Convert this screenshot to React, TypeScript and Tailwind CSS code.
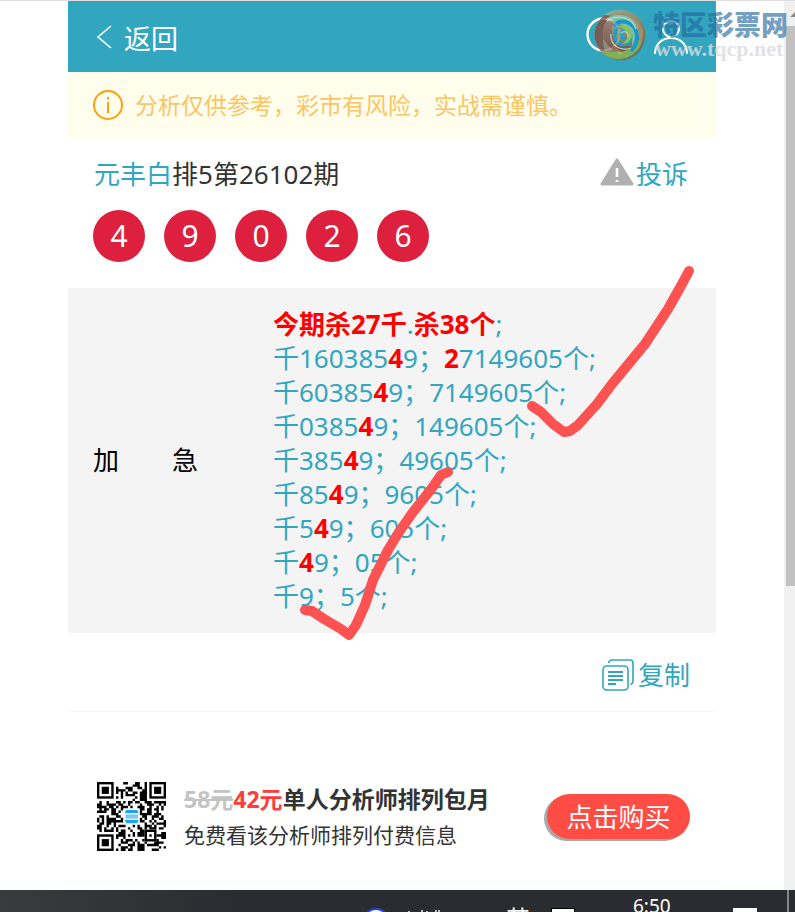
interface PickRow {
  head: string;
  hit: string;
  tail: string;
  lead?: string;
  rest: string;
}

const BALLS = ['4', '9', '0', '2', '6'];

const ROWS: PickRow[] = [
  { head: '千160385', hit: '4', tail: '9；', lead: '2', rest: '7149605个;' },
  { head: '千60385', hit: '4', tail: '9；', rest: '7149605个;' },
  { head: '千0385', hit: '4', tail: '9；', rest: '149605个;' },
  { head: '千385', hit: '4', tail: '9；', rest: '49605个;' },
  { head: '千85', hit: '4', tail: '9；', rest: '9605个;' },
  { head: '千5', hit: '4', tail: '9；', rest: '605个;' },
  { head: '千', hit: '4', tail: '9；', rest: '05个;' },
  { head: '千9；', hit: '', tail: '', rest: '5个;' },
];

const QR_SIZE = 29;

function isFinder(x: number, y: number) {
  return (x < 8 && y < 8) || (x > 20 && y < 8) || (x < 8 && y > 20);
}

function qrPath() {
  let d = '';
  let seed = 26102;
  for (let y = 0; y < QR_SIZE; y++) {
    for (let x = 0; x < QR_SIZE; x++) {
      seed = (seed * 1103515245 + 12345) % 2147483648;
      if (isFinder(x, y)) continue;
      if (x > 10 && x < 18 && y > 10 && y < 18) continue;
      if (x > 19 && x < 25 && y > 19 && y < 25) continue;
      if (seed / 2147483648 > 0.47) d += `M${x} ${y}h1v1h-1z`;
    }
  }
  return d;
}

function Finder({ x, y, size = 7 }: { x: number; y: number; size?: number }) {
  return (
    <g>
      <rect x={x + 0.5} y={y + 0.5} width={size - 1} height={size - 1} fill="none" stroke="#000" />
      <rect x={x + 2} y={y + 2} width={size - 4} height={size - 4} />
    </g>
  );
}

function QrCode() {
  return (
    <svg viewBox="0 0 29 29" className="w-[69px] h-[69px] shrink-0" role="img" aria-label="QR">
      <path d={qrPath()} />
      <Finder x={0} y={0} />
      <Finder x={22} y={0} />
      <Finder x={0} y={22} />
      <Finder x={20} y={20} size={5} />
      <path d="M12.3 11.8h4.5l.7 1.2h-5.8zM11.7 16h5.8l-.7 1.3h-4.5z" fill="#1aa3ee" />
      <rect x="12" y="13.6" width="5.2" height="1.8" fill="#7cc8ee" />
    </svg>
  );
}

function Swirl() {
  return (
    <svg viewBox="0 0 54 54" className="w-[54px] h-[54px]" aria-hidden="true">
      <defs>
        <linearGradient id="rim" x1="0" y1="0" x2="1" y2="1">
          <stop offset="0" stopColor="#9cc4ae" />
          <stop offset="0.5" stopColor="#9a8a68" />
          <stop offset="1" stopColor="#5d5238" />
        </linearGradient>
        <linearGradient id="rust" x1="0" y1="0" x2="0" y2="1">
          <stop offset="0" stopColor="#b5826a" />
          <stop offset="1" stopColor="#8f3f2c" />
        </linearGradient>
      </defs>
      <circle cx="27" cy="27" r="25.5" fill="url(#rim)" />
      <path d="M12 7C-3 18-1 39 13 46c-6-14-2-28 8-38z" fill="#8a4a3c" />
      <path d="M21 7C6 14 6 34 20 41c9 5 20 3 24-3-12 2-24-4-25-14-1-8 3-14 10-17z" fill="url(#rust)" />
      <path d="M8 43c9 11 29 11 38-3 3-5 4-10 3-15-3 11-13 19-24 19-7 0-12 0-17-1z" fill="#92b53c" />
      <path d="M14 10C25 0 43 5 49 20c2 6 1 13-2 18 0-13-7-23-18-27-6-2-11-2-15-1z" fill="#c08a4c" />
      <path d="M12 12C23 3 37 6 43 16c5 10 2 21-5 26 3-9 1-19-7-24-7-4-13-6-19-6z" fill="#8fc9a0" />
      <path d="M38 43c7-7 8-18 2-25-6-6-15-6-19 0" fill="none" stroke="#1593cc" strokeWidth="4" />
      <path d="M26 19c-5 4-6 12-1 16 5 4 13 1 13-6 0-6-8-8-10-3-1 3 2 6 5 4" fill="none" stroke="#13a0c8" strokeWidth="3" />
      <path d="M25 19c7-3 14 0 14 7 0 6-4 10-10 10 5-3 7-8 4-12-2-4-5-5-8-5z" fill="#a8c83f" />
      <path d="M18 26c-1 11 9 18 20 14M14 13c11-7 25-4 29 8M28 25c3-3 8-1 7 4" fill="none" stroke="#d5e6d0" strokeWidth="1.2" />
    </svg>
  );
}

function Watermark() {
  return (
    <div className="absolute left-[525px] top-[7px] z-10 flex items-center gap-1.5 opacity-80 pointer-events-none">
      <Swirl />
      <div className="whitespace-nowrap">
        <div className="text-[27px] leading-7 h-7 font-black text-[#2368a0]/80">特区彩票网</div>
        <div className="pl-0.5 text-[22px] leading-5 font-bold text-[#dcdce0] font-['Liberation_Serif',serif]">
          www.tqcp.net
        </div>
      </div>
    </div>
  );
}

function Header() {
  return (
    <header className="flex items-center justify-between h-[71px] bg-[#33a6bf] pl-7 pr-7 text-white">
      <a href="#back" className="flex items-center gap-3 text-[27px] leading-9 pt-1">
        <svg viewBox="0 0 16 24" className="w-4 h-6 -mt-1" fill="none" stroke="currentColor" strokeWidth="1.6">
          <path d="M15 1L2 12l13 11" />
        </svg>
        返回
      </a>
      <div className="flex items-center gap-[29px]">
        <button aria-label="搜索">
          <svg viewBox="0 0 38 40" className="w-[38px] h-10" fill="none" stroke="currentColor" strokeWidth="2.4">
            <circle cx="18.5" cy="17.5" r="16" />
            <path d="M29 29.500l7 7.500" />
          </svg>
        </button>
        <button aria-label="我的">
          <svg viewBox="0 0 36 36" className="w-9 h-9" fill="none" stroke="currentColor" strokeWidth="2">
            <circle cx="19" cy="10" r="8" />
            <path d="M3 35c0-10 7-16 16-16s16 6 16 16" />
          </svg>
        </button>
      </div>
    </header>
  );
}

function CheckMarks() {
  return (
    <svg
      viewBox="0 0 648 345"
      className="absolute left-0 top-0 w-[648px] h-[345px] overflow-visible pointer-events-none"
      fill="none"
      stroke="#fc5252"
      strokeWidth="10"
      strokeLinecap="round"
      strokeLinejoin="round"
    >
      <path d="M464 118L473 124L485 136L496 144L502 143L510 137L529 116L544 96L577 56L600 21L614 -4L621 -17" />
      <path d="M237 322L244 323L256 331L273 341L281 347L288 337L297 317L305 292L320 262L331 244L345 224L364 200L373 187L380 184" />
    </svg>
  );
}

function Taskbar() {
  return (
    <footer className="flex items-start h-[22px] shrink-0 overflow-hidden bg-linear-to-r from-[#3a3b3e] to-[#2b2c31] to-30% text-white">
      <div className="flex-1" />
      <div className="mt-[18px] w-[26px] h-[26px] shrink-0 rounded-full border-2 border-[#2545e8] bg-white" />
      <svg viewBox="0 0 117 22" className="w-[117px] h-[22px] shrink-0" stroke="#fff" strokeWidth="1.4" aria-hidden="true">
        <path d="M20 21v1M33 20v2M38 21v1M47 20v2M50 20v2" />
      </svg>
      <div className="pt-[15px] w-[45px] shrink-0 text-2xl leading-7">英</div>
      <div className="mt-[18px] w-6 h-5 shrink-0 border border-black bg-white" />
      <time className="pt-1 pl-[58px] w-[158px] shrink-0 text-[19px] leading-6">6:50</time>
      <div className="mt-[18px] w-6 h-5 shrink-0 bg-white" />
      <div className="ml-[30px] mr-1.5 w-0.5 h-full shrink-0 bg-[#85868a]" />
    </footer>
  );
}

export default function App() {
  return (
    <div className="h-screen flex flex-col overflow-hidden bg-white font-['Noto_Sans','Noto_Sans_CJK_SC',sans-serif]">
      <div className="flex flex-1 min-h-0 border-t border-[#dedede]">
        <main className="flex-1 min-w-0">
          <div className="relative max-w-[648px] mx-auto">
            <Header />
            <Watermark />

            <div className="flex items-center gap-3 h-[65px] pl-[25px] bg-[#fffeec] text-[23px] text-[#fbc466]">
              <svg viewBox="0 0 30 30" className="w-[30px] h-[30px] shrink-0" fill="none" stroke="#ff9f0a" strokeWidth="2">
                <circle cx="15" cy="15" r="14" />
                <path d="M15 12v11M15 7v2.4" />
              </svg>
              <p className="pt-0.5 whitespace-nowrap">分析仅供参考，彩市有风险，实战需谨慎。</p>
            </div>

            <section className="px-[26px] pt-[19px] pb-[26px]">
              <div className="flex items-center justify-between text-[26px] leading-9">
                <h1 className="text-[#333]">
                  <a href="#analyst" className="text-[#33a6bf]">元丰白</a>排5第26102期
                </h1>
                <a href="#complain" className="flex items-center gap-0.5 pr-0.5 text-[#33a6bf]">
                  <svg viewBox="0 0 34 28" className="w-[34px] h-7 -mt-1" aria-hidden="true">
                    <path d="M17 2L32 26H2z" fill="#b0b0b0" stroke="#b0b0b0" strokeWidth="3" strokeLinejoin="round" />
                    <path d="M17 10v9M17 22v2" stroke="#fff" strokeWidth="2.6" />
                  </svg>
                  投诉
                </a>
              </div>
              <div className="flex gap-[19px] mt-[18px] -ml-px">
                {BALLS.map((n, i) => (
                  <span
                    key={i}
                    className="flex items-center justify-center w-[52px] h-[52px] rounded-full bg-[#dc203e] text-white text-3xl"
                  >
                    {n}
                  </span>
                ))}
              </div>
            </section>

            <section className="relative flex items-center bg-[#f4f4f4] pt-[19px] pb-5 pl-[25px] text-[26px] leading-[34px]">
              <div className="flex justify-between w-[105px] text-black">
                <span>加</span>
                <span>急</span>
              </div>
              <div className="pl-[75px] text-[#33a6bf] whitespace-nowrap">
                <p>
                  <b className="text-[#f00]">今期杀27千</b>.<b className="text-[#f00]">杀38个</b>;
                </p>
                {ROWS.map((r) => (
                  <p key={r.head}>
                    {r.head}
                    <b className="text-[#f00]">{r.hit}</b>
                    {r.tail}
                    {r.lead && <b className="text-[#f00]">{r.lead}</b>}
                    {r.rest}
                  </p>
                ))}
              </div>
              <CheckMarks />
            </section>

            <div className="flex justify-end h-[79px] pt-[23px] pr-[26px] border-b border-[#f8f8f8]">
              <button className="flex items-center gap-1 h-[38px] text-[26px] text-[#33a6bf]">
                <svg viewBox="0 0 32 32" className="w-8 h-8" fill="none" stroke="currentColor" strokeWidth="1.6" strokeLinejoin="round">
                  <rect x="1" y="7" width="25" height="24" rx="3.5" />
                  <path d="M6.500 4c.5-2 1.500-3 3.500-3h18c2 0 3 1 3 3v18c0 2-1 3-2.500 3.500" />
                  <path d="M6 13h15M6 17h15M6 21h15M6 25h8" strokeWidth="2" />
                </svg>
                复制
              </button>
            </div>

            <section className="flex items-center h-[170px] pt-10 pl-[29px] pr-[26px] border-b border-[#f8f8f8]">
              <QrCode />
              <div className="flex-1 pl-[18px] whitespace-nowrap text-[#333]">
                <p className="text-[23px] leading-9 font-bold">
                  <del className="text-[#c4c4c4]">58元</del>
                  <span className="text-[#ff3b3b]">42元</span>单人分析师排列包月
                </p>
                <p className="text-[21px] leading-9">免费看该分析师排列付费信息</p>
              </div>
              <button className="w-[143px] h-[45px] rounded-full bg-[#ff4d46] text-white text-[26px] leading-8 shadow-[-3px_2px_0_#a9a9a9]">
                点击购买
              </button>
            </section>
          </div>
        </main>

        <div className="flex flex-col w-[11px] shrink-0 bg-[#f0f0f0] pl-0.5" aria-hidden="true">
          <svg viewBox="0 0 9 25" className="w-[9px] h-[25px] shrink-0">
            <path d="M4 16l5-5v5z" fill="#8a8a8a" />
          </svg>
          <div className="h-[63%] bg-[#c1c1c1]" />
        </div>
      </div>
      <Taskbar />
    </div>
  );
}
